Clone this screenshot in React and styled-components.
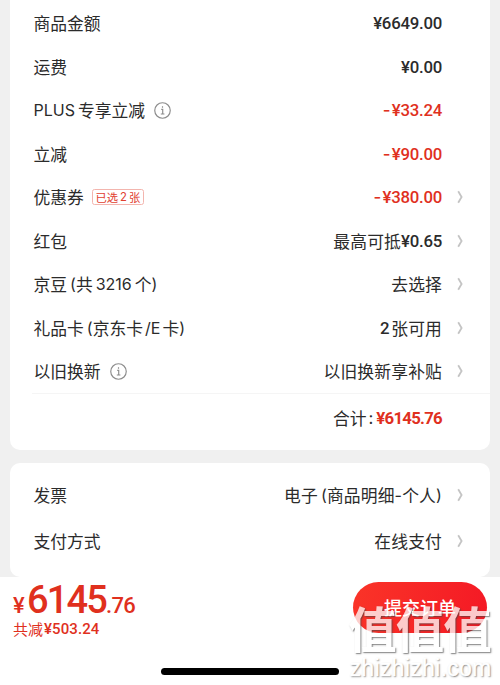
import styled, { createGlobalStyle } from "styled-components";

function InfoIcon() {
  return (
    <Info viewBox="0 0 16 16">
      <circle cx="8" cy="8" r="7.3" />
      <path d="M6.8 7h1.4v4.2M6.4 11.3h3.4M8 4.1v1.3" />
    </Info>
  );
}

function Row({ label, info, tag, value, minus, price, arrow, height }) {
  return (
    <RowContainer $height={height}>
      <Label>
        {label}
        {info && <InfoIcon />}
        {tag && <Tag>已选<TagNumber>2</TagNumber>张</Tag>}
      </Label>
      <Value>
        {value}
        {minus && <Minus>-</Minus>}
        {price && <Price $red={minus}>{price}</Price>}
      </Value>
      <ArrowBox>
        {arrow && (
          <Arrow viewBox="0 0 6 14">
            <path d="M1.2 1.2L4.6 7L1.2 12.8" />
          </Arrow>
        )}
      </ArrowBox>
    </RowContainer>
  );
}

function App() {
  return (
    <Page>
      <GlobalStyle />
      <PriceCard>
        {priceRows.map((row, i) => <Row key={i} {...row} />)}
        <Total>
          合计<Colon>:</Colon><Price $red $heavy>¥6145.76</Price>
        </Total>
      </PriceCard>
      <PayCard>
        {payRows.map((row, i) => <Row key={i} {...row} height="46px" />)}
      </PayCard>
      <Footer>
        <Summary>
          <Amount>
            <Small $spacing="2.4px">¥</Small>
            <Big>6145</Big>
            <Small $spacing="-0.6px">.76</Small>
          </Amount>
          <Saved>共减<SavedPrice>¥503.24</SavedPrice></Saved>
        </Summary>
        <Submit>提交订单</Submit>
        <HomeBar />
        <Watermark>
          <MarkName>值值值</MarkName>
          <MarkSite>zhizhizhi.com</MarkSite>
        </Watermark>
      </Footer>
    </Page>
  );
}

const GlobalStyle = createGlobalStyle`
  body {
    margin: 0;
    overflow: hidden;
  }
  * {
    box-sizing: border-box;
  }
`;

const Page = styled.div`
  width: 500px;
  height: 685px;
  display: flex;
  flex-direction: column;
  overflow: hidden;
  background: #f0f0f0;
  color: #2b2b2b;
  font-family: "Noto Sans CJK SC", sans-serif;
  font-size: 16.8px;
`;

const PriceCard = styled.div`
  flex: none;
  height: 450px;
  margin: 0 10px;
  padding-top: 1.7px;
  background: #fff;
  border-radius: 0 0 10px 10px;
`;

const PayCard = styled.div`
  flex: none;
  height: 114px;
  margin: 13px 10px 0;
  padding-top: 9px;
  background: #fff;
  border-radius: 10px;
`;

const RowContainer = styled.div`
  display: flex;
  align-items: center;
  height: ${(props) => props.$height || "43.5px"};
  padding: 0 24px 0 23.5px;
  line-height: 24px;
  white-space: nowrap;
`;

const Label = styled.div`
  display: flex;
  align-items: center;
  flex: 1;
`;

const Value = styled.div`
  display: flex;
  align-items: center;
  letter-spacing: 0.15px;
`;

const Latin = styled.span`
  margin-left: ${(props) => props.$left || "0"};
  margin-right: ${(props) => props.$gap || "0"};
  font-family: Inter, sans-serif;
  font-size: 16px;
`;

const Price = styled.span`
  color: ${(props) => (props.$red ? "#e0301e" : "#2b2b2b")};
  font-family: Roboto, sans-serif;
  font-size: 16.8px;
  font-weight: ${(props) => (props.$heavy ? 700 : 500)};
  letter-spacing: ${(props) => (props.$heavy ? "-0.75px" : "-0.25px")};
`;

const Minus = styled.span`
  margin-right: 1px;
  color: #e0301e;
  font-family: Inter, sans-serif;
  font-weight: 500;
`;

const Info = styled.svg`
  width: 17px;
  height: 17px;
  margin-left: 9px;
  fill: none;
  stroke: #8c8c8c;
  stroke-width: 1.1;
`;

const Tag = styled.span`
  display: flex;
  align-items: center;
  justify-content: center;
  width: 52px;
  height: 16px;
  margin-left: 8px;
  border: 1px solid #f3b5ae;
  border-radius: 2.5px;
  color: #e1402f;
  font-size: 11.3px;
  line-height: 14px;
`;

const TagNumber = styled.span`
  margin: 0 2px;
  font-family: Inter, sans-serif;
`;

const ArrowBox = styled.div`
  display: flex;
  width: 24px;
  padding-left: 15px;
`;

const Arrow = styled.svg`
  width: 6px;
  height: 14px;
  fill: none;
  stroke: #c4c4c4;
  stroke-width: 1.8;
`;

const Total = styled.div`
  display: flex;
  align-items: center;
  justify-content: flex-end;
  height: 49px;
  margin-left: 22px;
  padding-right: 48px;
  border-top: 1px solid #f5f5f5;
`;

const Colon = styled.span`
  margin: 0 3px 0 2px;
  font-family: Inter, sans-serif;
`;

const Footer = styled.div`
  position: relative;
  flex: 1;
  display: flex;
  align-items: flex-start;
  justify-content: space-between;
  padding: 5px 13px 0;
  background: #fff;
`;

const Summary = styled.div`
  display: flex;
  flex-direction: column;
  color: #e0301e;
`;

const Amount = styled.div`
  display: flex;
  align-items: baseline;
  height: 37px;
  font-family: Roboto, sans-serif;
  font-weight: 500;
  line-height: 36px;
`;

const Small = styled.span`
  font-size: 22px;
  letter-spacing: ${(props) => props.$spacing};
`;

const Big = styled.span`
  font-size: 38px;
  letter-spacing: -1.9px;
`;

const Saved = styled.div`
  display: flex;
  align-items: center;
  font-size: 15px;
  line-height: 20px;
`;

const SavedPrice = styled.span`
  margin-left: 1px;
  font-family: Roboto, sans-serif;
  font-weight: 500;
  font-size: 15px;
  letter-spacing: 0.1px;
`;

const Submit = styled.button`
  width: 134px;
  height: 51px;
  padding: 0 0 2px;
  border: none;
  border-radius: 26px;
  background: linear-gradient(100deg, #fa3428, #f41925);
  color: #fff;
  font-family: "Noto Sans CJK SC", sans-serif;
  font-size: 18px;
  font-weight: 500;
`;

const HomeBar = styled.div`
  position: absolute;
  left: 161px;
  bottom: 10px;
  width: 178px;
  height: 7px;
  border-radius: 4px;
  background: #000;
`;

const Watermark = styled.div`
  position: absolute;
  top: 22px;
  right: 7px;
  width: 145px;
  display: flex;
  flex-direction: column;
  align-items: center;
  color: #fff;
  opacity: 0.76;
  text-shadow: 1px 1px 1.5px rgba(70, 70, 70, 0.9);
`;

const MarkName = styled.div`
  height: 57px;
  margin-left: -2px;
  font-size: 48.5px;
  font-weight: 700;
  line-height: 57px;
  letter-spacing: -1px;
  white-space: nowrap;
`;

const MarkSite = styled.div`
  font-family: "Liberation Sans", sans-serif;
  font-size: 23px;
  line-height: 24px;
  letter-spacing: 0.3px;
  -webkit-text-stroke: 0.5px #fff;
`;

const priceRows = [
  { label: "商品金额", price: "¥6649.00" },
  { label: "运费", price: "¥0.00" },
  { label: <><Latin $gap="3px">PLUS</Latin>专享立减</>, info: true, minus: true, price: "¥33.24" },
  { label: "立减", minus: true, price: "¥90.00" },
  { label: "优惠券", tag: true, minus: true, price: "¥380.00", arrow: true },
  { label: "红包", value: "最高可抵", price: "¥0.65", arrow: true },
  { label: <>京豆<Latin $left="3px">(</Latin>共<Latin $left="3px" $gap="3px">3216</Latin>个<Latin>)</Latin></>, value: "去选择", arrow: true },
  { label: <>礼品卡<Latin $left="3px">(</Latin>京东卡<Latin $left="2px" $gap="2px">/E</Latin>卡<Latin>)</Latin></>, value: <><Price>2</Price><Latin $left="2px" />张可用</>, arrow: true },
  { label: "以旧换新", info: true, value: "以旧换新享补贴", arrow: true },
];

const payRows = [
  { label: "发票", value: <>电子<Latin $left="3px">(</Latin>商品明细<Latin>-</Latin>个人<Latin>)</Latin></>, arrow: true },
  { label: "支付方式", value: "在线支付", arrow: true },
];

export default App;
